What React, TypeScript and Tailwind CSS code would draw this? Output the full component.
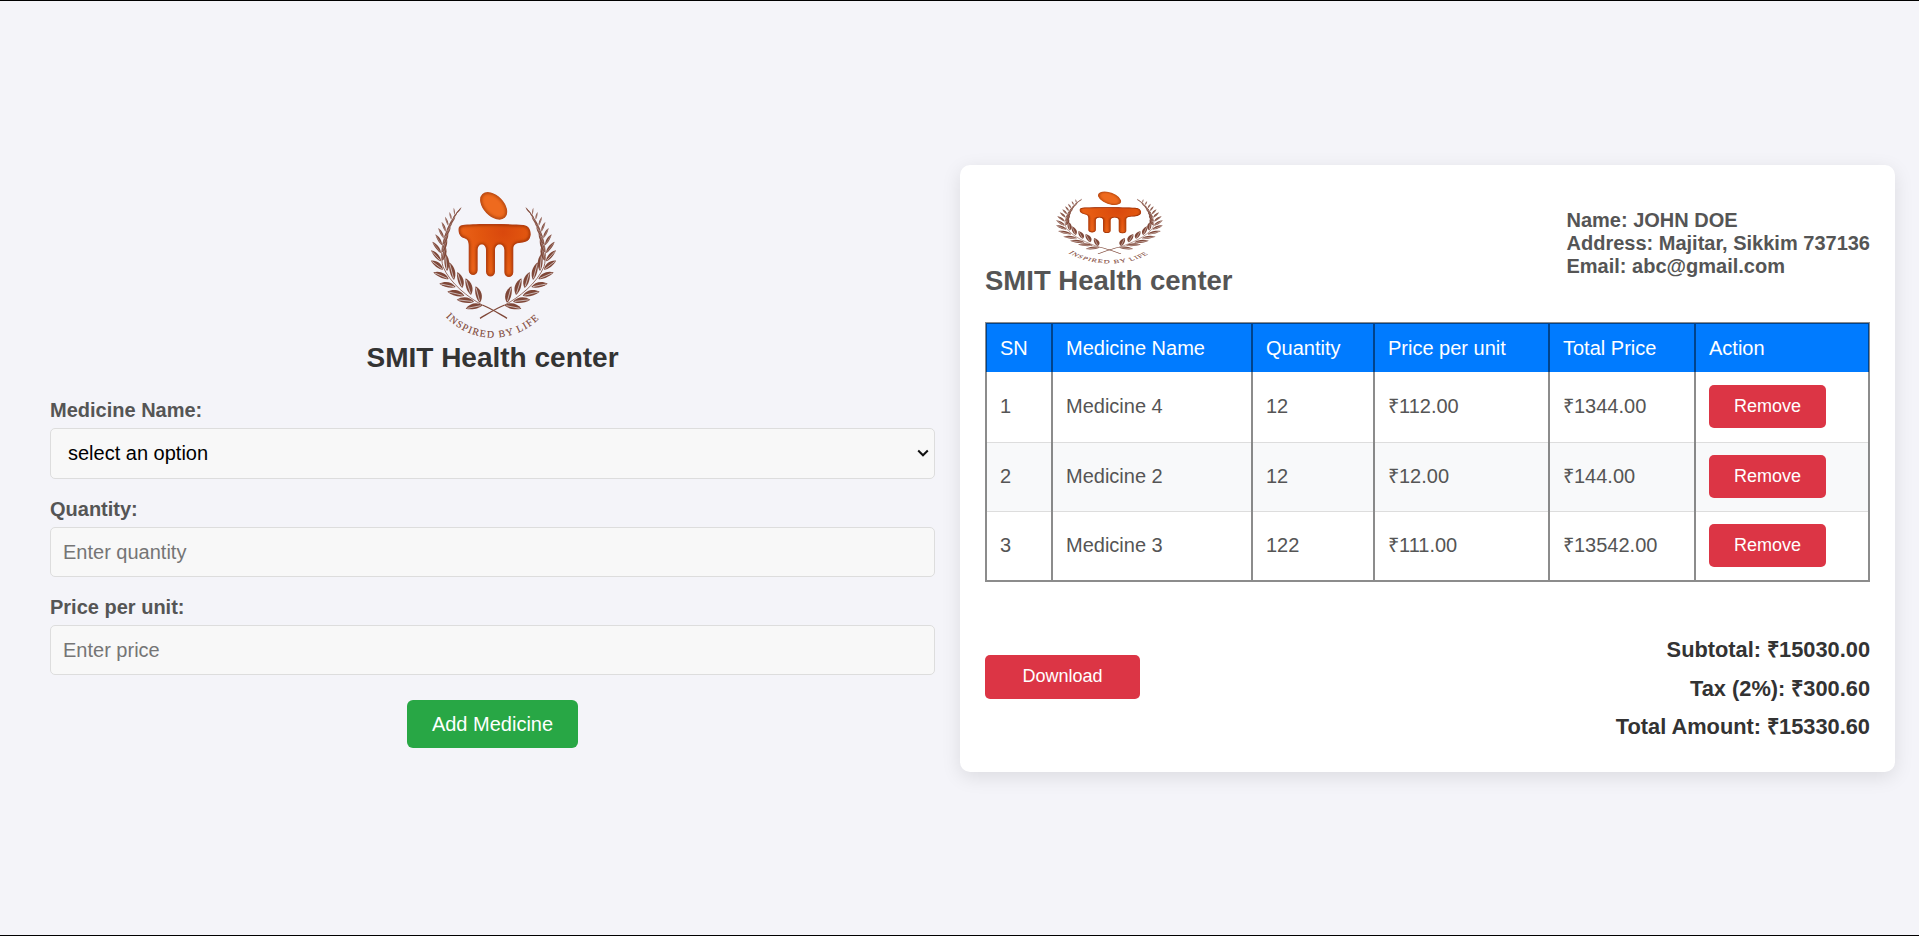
import { useId, type ReactNode } from "react";

// [baseX, baseY, tipX, tipY, width]
const leaves: [number, number, number, number, number][] = [
  [165, 353, 152, 304, 15],
  [138, 330, 122, 280, 15],
  [112, 309, 97, 261, 14],
  [87, 285, 73, 232, 13],
  [66, 258, 61, 205, 12],
  [52, 227, 62, 185, 9],
  [51, 202, 66, 163, 8],
  [53, 179, 70, 144, 7],
  [58, 156, 77, 126, 6],
  [65, 136, 83, 109, 5],
  [73, 118, 91, 95, 4.5],
  [83, 101, 97, 82, 3.5],
  [92, 87, 109, 68, 3],
  [172, 361, 122, 371, 14],
  [147, 350, 95, 344, 14],
  [118, 332, 67, 320, 14],
  [92, 306, 43, 296, 13],
  [71, 282, 25, 262, 13],
  [54, 254, 18, 227, 12],
  [48, 229, 18, 196, 10],
  [48, 204, 22, 170, 8],
  [51, 181, 31, 148, 7],
  [56, 160, 40, 129, 6],
  [62, 140, 50, 111, 5.5],
  [70, 122, 60, 95, 4.5],
  [79, 104, 73, 81, 4],
  [89, 90, 86, 68, 3],
];

function leafPath([bx, by, tx, ty, w]: [number, number, number, number, number]) {
  const dx = tx - bx;
  const dy = ty - by;
  const len = Math.hypot(dx, dy);
  const nx = (-dy / len) * w;
  const ny = (dx / len) * w;
  return `M${bx} ${by}C${bx + dx * 0.25 + nx} ${by + dy * 0.25 + ny} ${bx + dx * 0.7 + nx} ${by + dy * 0.7 + ny} ${tx} ${ty}C${bx + dx * 0.7 - nx * 0.6} ${by + dy * 0.7 - ny * 0.6} ${bx + dx * 0.2 - nx * 0.6} ${by + dy * 0.2 - ny * 0.6} ${bx} ${by}Z`;
}

function Branch({ vein }: { vein: string }) {
  return (
    <>
      {leaves.map((l, i) => (
        <g key={i}>
          <path d={leafPath(l)} fill="#7f4738" />
          <path
            d={`M${l[0] + (l[2] - l[0]) * 0.1} ${l[1] + (l[3] - l[1]) * 0.1}L${l[0] + (l[2] - l[0]) * 0.9} ${l[1] + (l[3] - l[1]) * 0.9}`}
            stroke={vein}
            strokeOpacity="0.75"
            strokeWidth={l[4] > 9 ? 2.6 : 1.2}
          />
        </g>
      ))}
      <path
        d="M246 400C222 386 200 371 172 360"
        fill="none"
        stroke="#7f4738"
        strokeWidth="4"
      />
      <path
        d="M172 360C130 338 75 295 54 245C40 195 62 120 108 68"
        fill="none"
        stroke="#7f4738"
        strokeWidth="2.4"
      />
    </>
  );
}

const BODY =
  "M118 119C160 116 250 116 296 120C312 122 318 136 317 150C315 166 304 172 288 173C272 174 265 179 265 192V262C265 281 238 281 238 262V196C238 173 210 173 210 196V260C210 279 183 279 183 260V196C183 173 158 173 158 196V256C158 275 131 275 131 256V184C131 170 128 163 118 160C105 156 100 144 100 134C100 124 106 120 118 119Z";

function Logo({ className, vein }: { className: string; vein: string }) {
  const id = useId().replace(/[^a-zA-Z0-9]/g, "");
  return (
    <svg viewBox="0 0 408 468" preserveAspectRatio="none" className={className} aria-hidden="true">
      <defs>
        <radialGradient id={`${id}g`} gradientUnits="userSpaceOnUse" cx="235" cy="140" r="140">
          <stop offset="0" stopColor="#d9480d" />
          <stop offset="0.5" stopColor="#e2560f" />
          <stop offset="1" stopColor="#ec641a" />
        </radialGradient>
        <clipPath id={`${id}b`}>
          <path d={BODY} />
        </clipPath>
        <clipPath id={`${id}e`}>
          <ellipse cx="206" cy="62.500" rx="49" ry="31" transform="rotate(46 206 62.500)" />
        </clipPath>
        <filter id={`${id}f`} x="-20%" y="-20%" width="140%" height="140%">
          <feGaussianBlur stdDeviation="4" />
        </filter>
        <path id={`${id}t`} d="M58 391A195 195 0 0 0 352 391" />
      </defs>
      <Branch vein={vein} />
      <g transform="matrix(-1 0 0 1 411 0)">
        <Branch vein={vein} />
      </g>
      <g clipPath={`url(#${id}e)`}>
        <ellipse cx="206" cy="62.500" rx="49" ry="31" transform="rotate(46 206 62.500)" fill="#ee6a1e" />
        <ellipse
          cx="206"
          cy="62.500"
          rx="49"
          ry="31"
          transform="rotate(46 206 62.500)"
          fill="none"
          stroke="#a03a0c"
          strokeWidth="8"
          filter={`url(#${id}f)`}
        />
      </g>
      <g clipPath={`url(#${id}b)`}>
        <path d={BODY} fill={`url(#${id}g)`} />
        <path d={BODY} fill="none" stroke="#962e08" strokeWidth="8" filter={`url(#${id}f)`} />
      </g>
      <text fill="#7f4738" className="font-['Liberation_Serif',serif] text-[30px]" stroke="#7f4738" strokeWidth="0.4">
        <textPath href={`#${id}t`} startOffset="6" textLength="312" lengthAdjust="spacing">
          INSPIRED BY LIFE
        </textPath>
      </text>
    </svg>
  );
}

function Field({ label, children }: { label: string; children: ReactNode }) {
  return (
    <label className="mb-[19px] flex flex-col gap-1.5 font-bold leading-[23px] text-[#555]">
      {label}
      {children}
    </label>
  );
}

const inputClass =
  "block h-[50px] w-full rounded-[5px] border border-[#ddd] bg-[#f8f8f8] px-3 font-normal text-black placeholder:text-[#757575] outline-none";

const rows = [
  { name: "Medicine 4", qty: 12, price: "112.00", total: "1344.00", height: "h-[70px]" },
  { name: "Medicine 2", qty: 12, price: "12.00", total: "144.00", height: "h-[69px]" },
  { name: "Medicine 3", qty: 122, price: "111.00", total: "13542.00", height: "h-[70px]" },
];

const cell = "border-x-2 border-black/45 px-[13px] text-left font-normal";

export default function App() {
  return (
    <main className="flex h-[936px] w-full items-start border-y border-black bg-[#f4f4f9] pl-[50px] pr-6 pt-[164px] font-['Liberation_Sans',Arial,sans-serif] text-[20px] leading-[23px]">
      <form className="mr-[25px] flex w-[885px] flex-col pt-5" onSubmit={(e) => e.preventDefault()}>
        <Logo className="h-[156px] w-[136px] self-center" vein="#f4f4f9" />
        <h2 className="mb-[25px] mt-px text-center text-[28px] font-bold leading-8 text-[#333]">SMIT Health center</h2>
        <Field label="Medicine Name:">
          <span className="relative block">
            <select className="block h-[51px] w-full appearance-none rounded-[5px] border border-[#ddd] bg-[#f8f8f8] px-[17px] font-normal text-black outline-none">
              <option>select an option</option>
            </select>
            <svg viewBox="0 0 12 8" className="pointer-events-none absolute right-1.5 top-[21px] h-2 w-3" aria-hidden="true">
              <path d="M1.200 1.500L6 6.300L10.800 1.500" fill="none" stroke="#111" strokeWidth="2" />
            </svg>
          </span>
        </Field>
        <Field label="Quantity:">
          <input className={inputClass} placeholder="Enter quantity" />
        </Field>
        <Field label="Price per unit:">
          <input className={inputClass} placeholder="Enter price" />
        </Field>
        <button className="mt-1.5 h-12 w-[171px] self-center rounded-md bg-[#28a745] text-white">Add Medicine</button>
      </form>

      <section className="h-[607px] w-[935px] rounded-[10px] bg-white px-[25px] pt-[23px] text-[#555] shadow-[0_5px_19px_rgba(0,0,0,0.1)]">
        <header className="flex h-[134px] items-start justify-between">
          <div className="flex flex-col items-center">
            <Logo className="h-[77px] w-[116px]" vein="#ffffff" />
            <h2 className="text-[27.500px] font-bold leading-8">SMIT Health center</h2>
          </div>
          <address className="mt-[21px] font-bold not-italic">
            <p>Name: JOHN DOE</p>
            <p>Address: Majitar, Sikkim 737136</p>
            <p>Email: abc@gmail.com</p>
          </address>
        </header>

        <table className="w-[885px] table-fixed border-collapse border-2 border-black/45">
          <colgroup>
            <col className="w-[66px]" />
            <col className="w-[200px]" />
            <col className="w-[122px]" />
            <col className="w-[175px]" />
            <col className="w-[146px]" />
            <col className="w-[174px]" />
          </colgroup>
          <thead>
            <tr className="h-[49px] bg-[#007bff] text-white">
              {["SN", "Medicine Name", "Quantity", "Price per unit", "Total Price", "Action"].map((h) => (
                <th key={h} className={cell}>
                  {h}
                </th>
              ))}
            </tr>
          </thead>
          <tbody>
            {rows.map((r, i) => (
              <tr key={r.name} className={`${r.height} ${i % 2 ? "bg-[#f8f9fa]" : ""} ${i < 2 ? "border-b border-b-[#ddd]" : ""}`}>
                <td className={cell}>{i + 1}</td>
                <td className={cell}>{r.name}</td>
                <td className={cell}>{r.qty}</td>
                <td className={cell}>₹{r.price}</td>
                <td className={cell}>₹{r.total}</td>
                <td className={cell}>
                  <button className="block h-[43px] w-[117px] rounded-[5px] bg-[#dc3545] pb-0.5 text-[18px] leading-5 text-white">
                    Remove
                  </button>
                </td>
              </tr>
            ))}
          </tbody>
        </table>

        <footer className="mt-[49px] flex items-start justify-between">
          <button className="mt-6 h-11 w-[155px] rounded-[5px] bg-[#dc3545] pb-0.5 text-[18px] leading-5 text-white">
            Download
          </button>
          <div className="text-right text-[21.800px] font-bold leading-[38.500px] text-[#333]">
            <p>Subtotal: ₹15030.00</p>
            <p>Tax (2%): ₹300.60</p>
            <p>Total Amount: ₹15330.60</p>
          </div>
        </footer>
      </section>
    </main>
  );
}
